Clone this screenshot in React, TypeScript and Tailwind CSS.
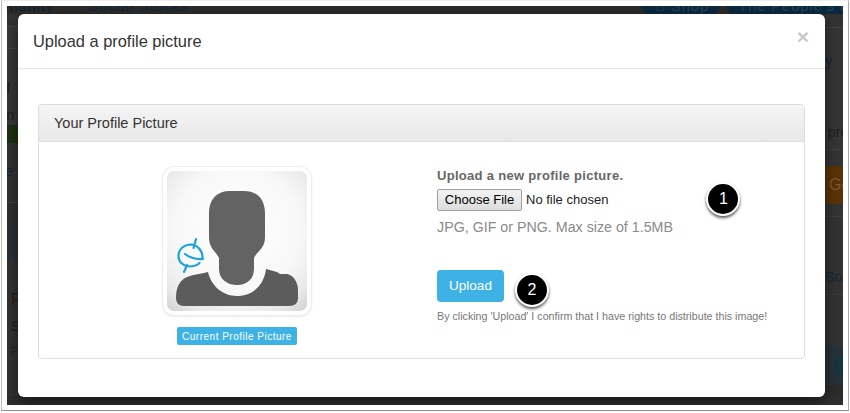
const font = { fontFamily: '"Liberation Sans", Arial, sans-serif' };

function Avatar() {
  return (
    <svg width="140" height="140" viewBox="0 0 140 140" className="block rounded-[7px]">
      <defs>
        <radialGradient id="avatarBg" cx="50%" cy="42%" r="72%">
          <stop offset="0%" stopColor="#ffffff" />
          <stop offset="62%" stopColor="#f8f8f8" />
          <stop offset="88%" stopColor="#e9e9e9" />
          <stop offset="100%" stopColor="#d8d8d8" />
        </radialGradient>
      </defs>
      <rect width="140" height="140" fill="url(#avatarBg)" />
      <path
        d="M63 20 L77 20 C90 20 98 28 98 42 L98 66 C98 78 90 80 87 87 L87 98 C87 108 80 114 70 114 C60 114 52 108 52 98 L52 87 C49 80 42 78 42 66 L42 42 C42 28 50 20 63 20 Z"
        fill="#636363"
      />
      <path
        d="M41 101 C44 114 55 125 70 125 C86 125 97 114 99 98 L110 101 L113 103 L120 103 C127 104 131 112 131 119 L131 127 C131 132 128 135 122 135 L17 135 C12 135 9 132 9 127 C9 116 13 109 20 106 C27 103 34 103 41 101 Z"
        fill="#5c5c5c"
      />
      <g fill="none" stroke="#1ba3dc" strokeWidth="2.2" strokeLinecap="round">
        <path d="M29 68 L26.5 77" />
        <path d="M17 101 L20 94" />
        <path d="M35.5 88 C36 80 31 74 24 73.5 C17 73.5 11.5 78.5 11.5 85 C11.5 91 16 95 22 95.5 C26 95.5 30 94.5 32.5 92" />
        <path d="M18 83 C23 87 30 88.5 36 88" />
      </g>
    </svg>
  );
}

function Marker({ n }: { n: number }) {
  return (
    <span className="flex h-[34px] w-[34px] items-center justify-center rounded-full border-2 border-white bg-black text-[16px] text-white shadow-[0_2px_3px_rgba(0,0,0,0.65)]">
      {n}
    </span>
  );
}

function LeftStrip() {
  return (
    <div className="w-[11px] shrink-0 overflow-hidden whitespace-nowrap text-[#1c1c1c]">
      <div className="h-[13px] border-b border-[#454545] bg-[#333333]" />
      <div className="h-[22px] border-b border-[#454545] bg-[#393939]" />
      <div className="h-[76px] bg-[#373737] pt-[25px] text-[15px] leading-[27px] text-[#202020]">
        <p className="-ml-[9px]">of</p>
        <p className="-ml-[9px]">on</p>
      </div>
      <div className="h-[18px] bg-[#1e3210]" />
      <div className="h-[60px] border-b border-[#444444] bg-[#343434] pt-[18px] text-[15px] leading-[20px] text-[#13283a]">
        <p className="-ml-[2px]">e</p>
      </div>
      <div className="h-[19px] bg-[#303030]" />
      <div className="h-[38px] bg-[#293238]" />
      <div className="h-[136px] bg-[#333333] pl-[4px] pt-[28px]">
        <p className="text-[17px] leading-[24px] text-[#2a1c10]">F</p>
        <p className="mt-[2px] text-[15px] leading-[24px] text-[#1e1e1e]">S</p>
        <p className="mt-[2px] text-[13px] leading-[24px] text-[#272727]">F</p>
      </div>
    </div>
  );
}

function RightStrip() {
  return (
    <div className="w-[18px] shrink-0 overflow-hidden whitespace-nowrap">
      <div className="h-[14px] border-b border-[#454545] bg-[#333333]" />
      <div className="h-[122px] border-b border-[#3f3f3f] bg-[#363636] pt-[23px] text-[14px] leading-[20px]">
        <p className="text-[#13283a]">y</p>
        <p className="ml-[3px] mt-[51px] text-[#202020]">pro</p>
      </div>
      <div className="h-[16px] bg-[#353535]" />
      <div className="h-[38px] bg-[#5a3408] pl-[4px] text-[16px] leading-[38px] text-[#7c5a32]">Ge</div>
      <div className="h-[13px] border-b border-[#3e3e3e] bg-[#343434]" />
      <div className="h-[78px] border-b border-[#3c3c3c] bg-[#333333] pt-[50px] text-[14px] leading-[20px] text-[#13283a]">
        Soa
      </div>
      <div className="h-[52px] bg-[#333333]" />
      <div className="flex h-[38px] items-center bg-[#26323a] pl-[9px]">
        <span className="h-[22px] w-[22px] shrink-0 rounded-full bg-[#173443]" />
      </div>
      <div className="h-[11px] bg-[#2c2c2c]" />
    </div>
  );
}

export default function App() {
  return (
    <div style={font} className="h-[413px] w-[850px] overflow-hidden bg-white">
      <div className="ml-[1px] h-[411px] w-[848px] border border-t-[#eeeeee] border-r-[#aaaaaa] border-b-[#8f8f8f] border-l-[#bbbbbb] pl-[5px] pr-[4px] pt-[5px]">
        <div className="h-[399px] w-[836px] overflow-hidden bg-[#2e2e2e]">
          {/* page behind the dialog */}
          <div className="flex h-[8px] items-end overflow-hidden whitespace-nowrap bg-[#2c2c2c] text-[15px] leading-[20px] tracking-[0.8px] text-[#12263a]">
            <span className="-mb-[2px] -ml-[36px] w-[117px] shrink-0 text-[#0f2130]">Community</span>
            <span className="-mb-[2px] w-[553px] shrink-0">Social Stocks</span>
            <span className="-mb-[2px] h-[20px] w-[79px] shrink-0 rounded-b-[12px] bg-[#0b2a40] pl-[15px] text-[#25435a]">⌂ Shop</span>
            <span className="-mb-[2px] ml-[6px] h-[20px] w-[117px] shrink-0 rounded-bl-[12px] bg-[#0b2a40] pl-[12px] text-[#25435a]">The People's Market</span>
          </div>

          <div className="flex h-[383px] items-stretch">
            <LeftStrip />
            <div className="relative z-10 flex h-[383px] w-[807px] shrink-0 flex-col rounded-[6px] bg-white shadow-[0_5px_15px_rgba(0,0,0,0.5)]">
              <div className="flex h-[55px] shrink-0 items-start justify-between border-b border-[#e5e5e5] pl-[15px] pr-[16px]">
                <h2 className="pt-[15px] text-[16.4px] leading-[24px] text-[#333333]">Upload a profile picture</h2>
                <span className="pt-[11px] text-[21px] font-bold leading-[24px] text-[#c9c9c9]">×</span>
              </div>

              <div className="px-[20px] pt-[35px]">
                <div className="h-[255px] rounded-[4px] border border-[#dddddd]">
                  <div className="flex h-[37px] items-center rounded-t-[3px] border-b border-[#dddddd] bg-gradient-to-b from-[#f5f5f5] to-[#e8e8e8] pl-[15px] pt-[1px] text-[14.5px] text-[#333333]">
                    Your Profile Picture
                  </div>
                  <div className="flex">
                    <div className="w-[398px] shrink-0 pr-[2px] pt-[24px]">
                      <div className="flex flex-col items-center">
                        <div className="rounded-[12px] border border-[#eeeeee] bg-white p-[4px] shadow-[0_1px_2px_rgba(0,0,0,0.08)]">
                          <Avatar />
                        </div>
                        <span className="mt-[11px] flex h-[18px] items-center rounded-[2px] bg-[#3eb2e4] px-[5px] text-[10px] font-normal tracking-[0.5px] text-white">
                          Current Profile Picture
                        </span>
                      </div>
                    </div>

                    <div className="pt-[25px]">
                      <p className="text-[13px] font-bold leading-[18px] tracking-[0.3px] text-[#666666]">
                        Upload a new profile picture.
                      </p>
                      <div className="mt-[4px] flex h-[22px] items-start">
                        <button className="h-[22px] w-[85px] rounded-[2px] border border-[#a0a0a0] bg-gradient-to-b from-[#f3f3f3] to-[#dddddd] text-[13px] leading-[20px] text-black">
                          Choose File
                        </button>
                        <span className="ml-[4px] text-[13px] leading-[22px] text-[#222222]">No file chosen</span>
                        <span className="ml-[98px] -mt-[7px]">
                          <Marker n={1} />
                        </span>
                      </div>
                      <p className="mt-[6px] text-[14.25px] leading-[20px] text-[#8a8a8a]">JPG, GIF or PNG. Max size of 1.5MB</p>
                      <div className="mt-[33px] flex items-start">
                        <button className="h-[32px] w-[67px] rounded-[4px] bg-[#3eb2e4] text-[13.5px] text-white">Upload</button>
                        <span className="ml-[11px] mt-[3px]">
                          <Marker n={2} />
                        </span>
                      </div>
                      <p className="mt-[1px] text-[10.7px] leading-[16px] text-[#777777]">
                        By clicking 'Upload' I confirm that I have rights to distribute this image!
                      </p>
                    </div>
                  </div>
                </div>
              </div>
            </div>
            <RightStrip />
          </div>
        </div>
      </div>
    </div>
  );
}
